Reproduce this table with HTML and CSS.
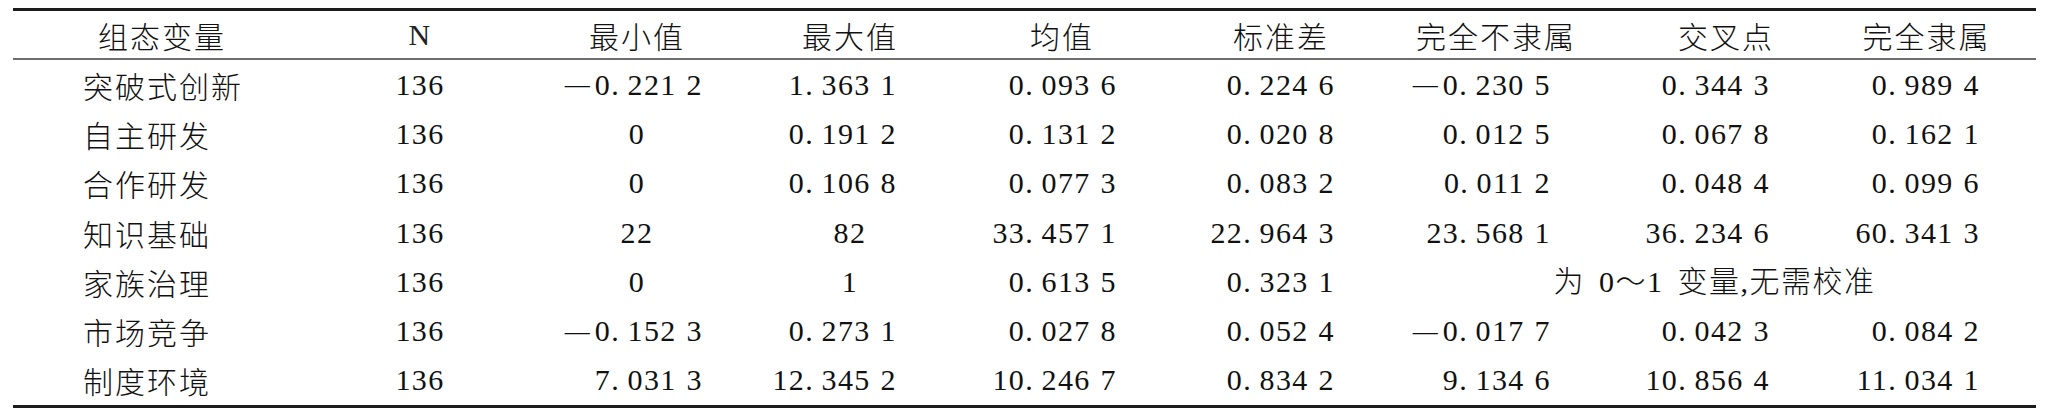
FILE: index.html
```html
<!DOCTYPE html>
<html lang="zh-CN">
<head>
<meta charset="utf-8">
<title>组态变量描述性统计</title>
<link rel="stylesheet" href="styles.css">
</head>
<body>
<div class="table">
  <div class="row head">
    <div class="cell c cjk">组态变量</div>
    <div class="cell c">N</div>
    <div class="cell c cjk">最小值</div>
    <div class="cell c cjk">最大值</div>
    <div class="cell c cjk">均值</div>
    <div class="cell c cjk">标准差</div>
    <div class="cell c cjk">完全不隶属</div>
    <div class="cell c cjk">交叉点</div>
    <div class="cell c cjk">完全隶属</div>
  </div>
  <div class="row">
    <div class="cell name cjk">突破式创新</div>
    <div class="cell c">136</div>
    <div class="cell r"><span class="neg">—</span>0.&#8201;221 2</div>
    <div class="cell r">1.&#8201;363 1</div>
    <div class="cell r">0.&#8201;093 6</div>
    <div class="cell r">0.&#8201;224 6</div>
    <div class="cell r"><span class="neg">—</span>0.&#8201;230 5</div>
    <div class="cell r">0.&#8201;344 3</div>
    <div class="cell r">0.&#8201;989 4</div>
  </div>
  <div class="row">
    <div class="cell name cjk">自主研发</div>
    <div class="cell c">136</div>
    <div class="cell c">0</div>
    <div class="cell r">0.&#8201;191 2</div>
    <div class="cell r">0.&#8201;131 2</div>
    <div class="cell r">0.&#8201;020 8</div>
    <div class="cell r">0.&#8201;012 5</div>
    <div class="cell r">0.&#8201;067 8</div>
    <div class="cell r">0.&#8201;162 1</div>
  </div>
  <div class="row">
    <div class="cell name cjk">合作研发</div>
    <div class="cell c">136</div>
    <div class="cell c">0</div>
    <div class="cell r">0.&#8201;106 8</div>
    <div class="cell r">0.&#8201;077 3</div>
    <div class="cell r">0.&#8201;083 2</div>
    <div class="cell r">0.&#8201;011 2</div>
    <div class="cell r">0.&#8201;048 4</div>
    <div class="cell r">0.&#8201;099 6</div>
  </div>
  <div class="row">
    <div class="cell name cjk">知识基础</div>
    <div class="cell c">136</div>
    <div class="cell c">22</div>
    <div class="cell c">82</div>
    <div class="cell r">33.&#8201;457 1</div>
    <div class="cell r">22.&#8201;964 3</div>
    <div class="cell r">23.&#8201;568 1</div>
    <div class="cell r">36.&#8201;234 6</div>
    <div class="cell r">60.&#8201;341 3</div>
  </div>
  <div class="row">
    <div class="cell name cjk">家族治理</div>
    <div class="cell c">136</div>
    <div class="cell c">0</div>
    <div class="cell c">1</div>
    <div class="cell r">0.&#8201;613 5</div>
    <div class="cell r">0.&#8201;323 1</div>
    <div class="cell c span3">为 0～1 变量,无需校准</div>
  </div>
  <div class="row">
    <div class="cell name cjk">市场竞争</div>
    <div class="cell c">136</div>
    <div class="cell r"><span class="neg">—</span>0.&#8201;152 3</div>
    <div class="cell r">0.&#8201;273 1</div>
    <div class="cell r">0.&#8201;027 8</div>
    <div class="cell r">0.&#8201;052 4</div>
    <div class="cell r"><span class="neg">—</span>0.&#8201;017 7</div>
    <div class="cell r">0.&#8201;042 3</div>
    <div class="cell r">0.&#8201;084 2</div>
  </div>
  <div class="row">
    <div class="cell name cjk">制度环境</div>
    <div class="cell c">136</div>
    <div class="cell r">7.&#8201;031 3</div>
    <div class="cell r">12.&#8201;345 2</div>
    <div class="cell r">10.&#8201;246 7</div>
    <div class="cell r">0.&#8201;834 2</div>
    <div class="cell r">9.&#8201;134 6</div>
    <div class="cell r">10.&#8201;856 4</div>
    <div class="cell r">11.&#8201;034 1</div>
  </div>
</div>
</body>
</html>
```

FILE: styles.css
```css
html, body {
  margin: 0;
  padding: 0;
  background: #ffffff;
}

.table {
  margin: 8px 0 0 13px;
  width: 2023px;
  border-top: 3px solid #1c1c1c;
  border-bottom: 3px solid #1c1c1c;
  font-family: "Liberation Serif", "Noto Sans CJK SC", serif;
  font-size: 30px;
  color: #111111;
}

.row {
  display: grid;
  grid-template-columns: 298px 218px 216px 210px 214px 224px 206px 254px 183px;
  height: 49.3px;
}

.row.head {
  height: 47px;
  border-bottom: 2px solid #6e6e6e;
}

.cell {
  display: flex;
  align-items: center;
  white-space: pre;
  letter-spacing: 1.4px;
  word-spacing: 1px;
  line-height: 1;
}

.cjk {
  font-family: "Noto Sans CJK SC", sans-serif;
  font-weight: 300;
  letter-spacing: 2px;
}

.c {
  justify-content: center;
}

.r {
  justify-content: flex-end;
}

.name {
  justify-content: flex-start;
  padding-left: 70px;
}

.head .cell:nth-child(2) {
  font-weight: 400;
  color: #222222;
}

.head .cell:nth-child(9) {
  padding-right: 36px;
}

.row .r:nth-child(3) { padding-right: 42px; }
.row .r:nth-child(4) { padding-right: 58px; }
.row .r:nth-child(5) { padding-right: 52px; }
.row .r:nth-child(6) { padding-right: 58px; }
.row .r:nth-child(7) { padding-right: 48px; }
.row .r:nth-child(8) { padding-right: 83px; }
.row .r:nth-child(9) { padding-right: 56px; }

.span3 {
  grid-column: 7 / span 3;
  font-family: "Liberation Serif", "Noto Sans CJK SC", serif;
  font-weight: 300;
  letter-spacing: 1.5px;
  word-spacing: 5px;
}

.neg {
  font-size: 25px;
  letter-spacing: 0;
  margin-right: 5px;
  vertical-align: 2px;
}
```
